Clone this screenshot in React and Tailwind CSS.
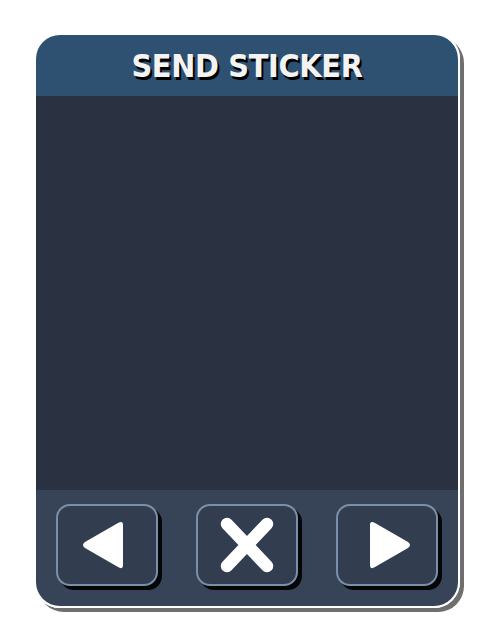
import React from 'react';

const NavButton = ({ children }) => (
  <button className="w-[102px] h-[82px] rounded-[14px] border-2 border-[#7a90aa] bg-[#323d50] shadow-[4px_4px_0_#050608] flex items-center justify-center">
    {children}
  </button>
);

const App = () => {
  return (
    <div className="w-[492px] h-[640px] bg-white flex items-start justify-center pt-[33px] pl-[2px]">
      <div className="w-[426px] h-[575px] rounded-[26px] border-2 border-white shadow-[4px_4px_0_#6f6f6f] overflow-hidden flex flex-col">
        <div className="h-[61px] bg-[#2e5071] flex items-center justify-center">
          <h1
            className="text-[32px] font-bold text-[#f3f3f3] tracking-[-0.3px] [text-shadow:2px_3px_0_#000]"
            style={{ fontFamily: '"DejaVu Sans Condensed", "DejaVu Sans", sans-serif' }}
          >
            SEND STICKER
          </h1>
        </div>
        <div className="flex-1 bg-[#2a3140]" />
        <div className="h-[116px] bg-[#374357] flex items-start justify-between px-[20px] pt-[14px]">
          <NavButton>
            <svg width="46" height="50" viewBox="0 0 46 50" className="mr-[8px]">
              <path d="M43 5 L43 45 Q43 50 38 47 L5 28 Q1 25 5 22 L38 3 Q43 0 43 5 Z" fill="#fff" />
            </svg>
          </NavButton>
          <NavButton>
            <svg width="56" height="58" viewBox="0 0 56 58">
              <path d="M8 8 L48 50 M48 8 L8 50" stroke="#fff" strokeWidth="12.5" strokeLinecap="round" />
            </svg>
          </NavButton>
          <NavButton>
            <svg width="46" height="50" viewBox="0 0 46 50" className="ml-[6px]">
              <path d="M3 5 L3 45 Q3 50 8 47 L41 28 Q45 25 41 22 L8 3 Q3 0 3 5 Z" fill="#fff" />
            </svg>
          </NavButton>
        </div>
      </div>
    </div>
  );
};

export default App;
